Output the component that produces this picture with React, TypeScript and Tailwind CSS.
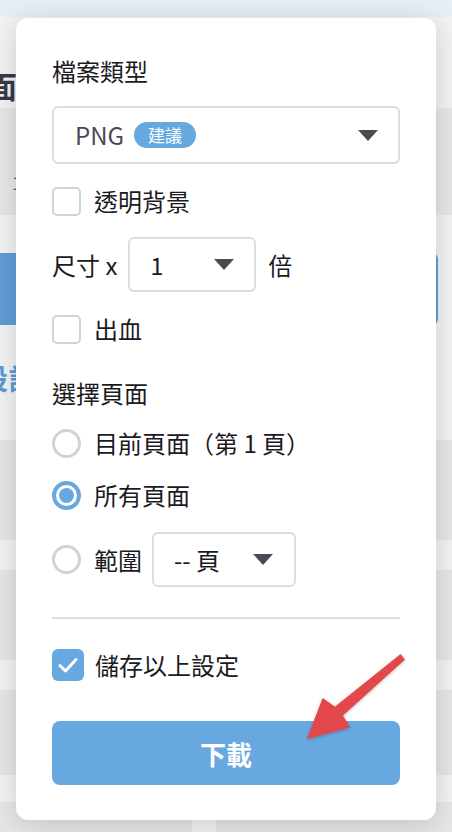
import React from "react";

const font = { fontFamily: '"Noto Sans CJK TC", "Noto Sans", sans-serif' };

const Caret = () => (
  <svg width="20" height="11" viewBox="0 0 20 11" className="shrink-0">
    <path d="M0 0 H20 L10 11 Z" fill="#4a4a55" />
  </svg>
);

const Checkbox = ({ checked }: { checked?: boolean }) =>
  checked ? (
    <div className="w-8 h-8 rounded-[6px] bg-[#66a8df] flex items-center justify-center shrink-0">
      <svg width="20" height="16" viewBox="0 0 20 16">
        <path d="M2 8.5 L7.5 14 L18 2.5" fill="none" stroke="white" strokeWidth="3" strokeLinecap="round" strokeLinejoin="round" />
      </svg>
    </div>
  ) : (
    <div className="w-[29px] h-[29px] rounded-[5px] border-2 border-[#ccd4d7] bg-white shrink-0" />
  );

const Radio = ({ checked }: { checked?: boolean }) =>
  checked ? (
    <div className="w-[29px] h-[29px] rounded-full border-4 border-[#66a8df] flex items-center justify-center shrink-0">
      <div className="w-[15px] h-[15px] rounded-full bg-[#66a8df]" />
    </div>
  ) : (
    <div className="w-[29px] h-[29px] rounded-full border-[3.5px] border-[#ccd4d7] shrink-0" />
  );

export default function App() {
  return (
    <div className="relative w-[452px] h-[832px] overflow-hidden bg-[#f3f3f4]" style={font}>
      {/* page behind the popover */}
      <div className="flex flex-col">
        <div className="h-[17px] bg-[#e8eef5]" />
        <div className="h-[91px] bg-[#f3f3f4] flex items-end pb-[8px]">
          <span className="ml-[-13px] text-[30px] font-bold text-[#3a3a44] leading-none">面</span>
        </div>
        <div className="h-[107px] bg-[#e6e7e9] flex items-center">
          <span className="ml-[12px] mt-[40px] text-[18px] text-[#555] leading-none">1</span>
        </div>
        <div className="h-[38px] bg-[#f3f3f4]" />
        <div className="h-[72px] flex">
          <div className="ml-[-10px] w-[448px] rounded-r-[6px] bg-[#5f9ed6]" />
        </div>
        <div className="h-[115px] bg-[#f3f3f4] flex items-center">
          <span className="ml-[-20px] mt-[-10px] text-[28px] font-bold text-[#5b9bd5] leading-none">設計</span>
        </div>
        <div className="h-[100px] bg-[#e5e6e8]" />
        <div className="h-[30px] bg-[#f3f3f4]" />
        <div className="h-[90px] bg-[#e5e6e8]" />
        <div className="h-[30px] bg-[#f3f3f4]" />
        <div className="h-[85px] bg-[#e5e6e8]" />
        <div className="h-[27px] bg-[#f3f3f4]" />
        <div className="h-[32px] flex">
          <div className="w-[192px] bg-[#e5e6e8]" />
          <div className="w-[24px] bg-[#f3f3f4]" />
          <div className="flex-1 bg-[#e5e6e8]" />
        </div>
      </div>

      {/* export popover */}
      <div className="absolute left-4 top-[18px] w-[420px] h-[802px] rounded-[12px] bg-white shadow-[0_4px_28px_rgba(0,0,0,0.16)] px-9 pt-[35px] flex flex-col text-[24px] text-[#1b1b1f]">
        <div className="h-9 flex items-center">檔案類型</div>

        <div className="mt-[17px] h-[58px] rounded-[6px] border-2 border-[#dcdce1] flex items-center pl-[21px] pr-[20px]">
          <span className="text-[#4a4a55]">PNG</span>
          <span className="ml-[10px] h-[26px] px-[14px] rounded-full bg-[#66a8df] text-white text-[17px] flex items-center">建議</span>
          <div className="flex-1" />
          <Caret />
        </div>

        <div className="mt-[19px] h-9 flex items-center gap-[13px]">
          <Checkbox />
          <span>透明背景</span>
        </div>

        <div className="mt-[18px] h-[55px] flex items-center">
          <span>尺寸 x</span>
          <div className="ml-[11px] w-32 h-[55px] rounded-[6px] border-2 border-[#dcdce1] flex items-center pl-[20px] pr-[20px]">
            <span className="flex-1">1</span>
            <Caret />
          </div>
          <span className="ml-[12px]">倍</span>
        </div>

        <div className="mt-[19px] h-9 flex items-center gap-[13px]">
          <Checkbox />
          <span>出血</span>
        </div>

        <div className="mt-[28px] h-9 flex items-center">選擇頁面</div>

        <div className="mt-[14px] h-9 flex items-center gap-[13px]">
          <Radio />
          <span>目前頁面（第 1 頁）</span>
        </div>

        <div className="mt-4 h-9 flex items-center gap-[13px]">
          <Radio checked />
          <span>所有頁面</span>
        </div>

        <div className="mt-[19px] h-[55px] flex items-center">
          <Radio />
          <span className="ml-[13px]">範圍</span>
          <div className="ml-[10px] w-36 h-[55px] rounded-[6px] border-2 border-[#dcdce1] flex items-center pl-[20px] pr-[21px]">
            <span className="flex-1">-- 頁</span>
            <Caret />
          </div>
        </div>

        <div className="mt-[30px] h-[2px] bg-[#dcdde2]" />

        <div className="mt-[28px] h-9 flex items-center gap-[11px]">
          <Checkbox checked />
          <span>儲存以上設定</span>
        </div>

        <button className="mt-[38px] h-16 rounded-[8px] bg-[#66a8df] text-white text-[26px] font-bold flex items-center justify-center">
          下載
        </button>
      </div>

      {/* annotation arrow */}
      <svg className="absolute left-0 top-0 pointer-events-none" width="452" height="832" viewBox="0 0 452 832">
        <defs>
          <filter id="sh" x="-20%" y="-20%" width="140%" height="140%">
            <feDropShadow dx="0" dy="1" stdDeviation="1.5" floodColor="#000" floodOpacity="0.25" />
          </filter>
        </defs>
        <polygon
          points="400.5,655 404,659.5 342,715.5 349,727 308,738 323,699 335,707.5"
          fill="#e2474c"
          strokeLinejoin="round"
          stroke="#e2474c"
          strokeWidth="1.5"
          filter="url(#sh)"
        />
      </svg>
    </div>
  );
}
